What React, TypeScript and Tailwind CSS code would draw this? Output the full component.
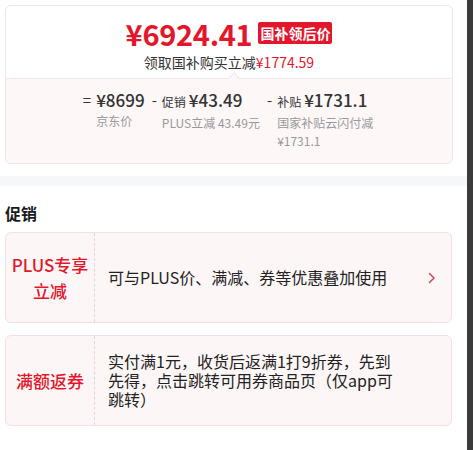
import { ReactNode } from 'react';

const RED = 'text-[#e3162b]';

function PriceColumn({ op, head, label, className = '' }: { op: string; head: ReactNode; label: ReactNode; className?: string }) {
  return (
    <div className="flex items-start">
      <span className="mr-[5px] text-[15px] leading-[22px] text-[#333]">{op}</span>
      <div className={`flex flex-col ${className}`}>
        <div className="flex items-baseline text-[17px] leading-[22px] font-medium text-[#333]">{head}</div>
        <div className="mt-[1px] text-[12px] leading-[18px] text-[#999]">{label}</div>
      </div>
    </div>
  );
}

function Chevron() {
  return (
    <svg width="8" height="12" viewBox="0 0 8 12" fill="none">
      <path d="M1.5 1.5 L6 6 L1.5 10.5" stroke="#d2465b" strokeWidth="1.5" strokeLinecap="round" strokeLinejoin="round" />
    </svg>
  );
}

function PromoCard({ title, text, arrow }: { title: ReactNode; text: string; arrow?: boolean }) {
  return (
    <div className="flex h-[91px] w-[447px] rounded-[6px] border border-[#f3e0e3] bg-[#fdf6f7]">
      <div className={`flex w-[89px] shrink-0 items-center justify-center border-r border-dashed border-[#efd0d5] text-center text-[17px] leading-[26px] font-medium ${RED}`}>
        {title}
      </div>
      <div className="flex flex-1 items-center pl-[13px] pr-[14px]">
        <p className="w-[290px] text-[16px] leading-[19px] text-[#222]">{text}</p>
        {arrow && (
          <span className="ml-auto mr-[1px] flex">
            <Chevron />
          </span>
        )}
      </div>
    </div>
  );
}

export default function App() {
  return (
    <div className="flex h-[450px] w-[473px] overflow-hidden bg-white font-['Noto_Sans_CJK_SC','Noto_Sans',sans-serif]">
      <div className="w-[467px] shrink-0 bg-white">
        {/* price summary */}
        <div className="px-[5px] pt-[5px]">
          <div className="w-[448px] overflow-hidden rounded-[6px] border border-[#f0e5e7]">
            <div className="flex h-[72px] flex-col items-center pt-[12px]">
              <div className="flex h-[30px] items-center">
                <span className={`text-[29px] leading-[30px] font-bold tracking-[-0.3px] ${RED}`}>¥6924.41</span>
                <span className="ml-[6px] rounded-[2px] bg-[#e3162b] px-[2px] text-[14px] leading-[22px] font-bold text-white">国补领后价</span>
              </div>
              <div className="mt-[5px] text-[14px] leading-[18px] text-[#333]">
                领取国补购买立减<span className={RED}>¥1774.59</span>
              </div>
            </div>
            <div className="relative flex h-[85px] justify-center border-t border-[#f5e6e9] bg-[#fdf7f8] pt-[10px]">
              <span className="absolute -top-[5px] left-[224px] h-[8px] w-[8px] rotate-45 border-l border-t border-[#f5e6e9] bg-[#fdf7f8]" />
              <div className="flex gap-[7px]">
                <PriceColumn op="=" head="¥8699" label="京东价" />
                <PriceColumn
                  op="-"
                  head={<><span className="mr-[3px] text-[12px] font-normal">促销</span>¥43.49</>}
                  label="PLUS立减 43.49元"
                />
                <PriceColumn
                  op="-"
                  className="w-[98px]"
                  head={<><span className="mr-[3px] text-[12px] font-normal">补贴</span>¥1731.1</>}
                  label="国家补贴云闪付减¥1731.1"
                />
              </div>
            </div>
          </div>
        </div>

        <div className="mt-[12px] h-[10px] bg-[#f6f7f9]" />

        {/* promotions */}
        <div className="px-[5px] pt-[16px]">
          <h3 className="text-[16px] leading-[22px] font-bold text-[#1a1a1a]">促销</h3>
          <div className="mt-[8px] flex flex-col gap-[12px]">
            <PromoCard title={<>PLUS专享<br />立减</>} text="可与PLUS价、满减、券等优惠叠加使用" arrow />
            <PromoCard title="满额返券" text="实付满1元，收货后返满1打9折券，先到先得，点击跳转可用券商品页（仅app可跳转）" />
          </div>
        </div>
      </div>
      <div className="flex-1 bg-[#3b3b3b]" />
    </div>
  );
}
